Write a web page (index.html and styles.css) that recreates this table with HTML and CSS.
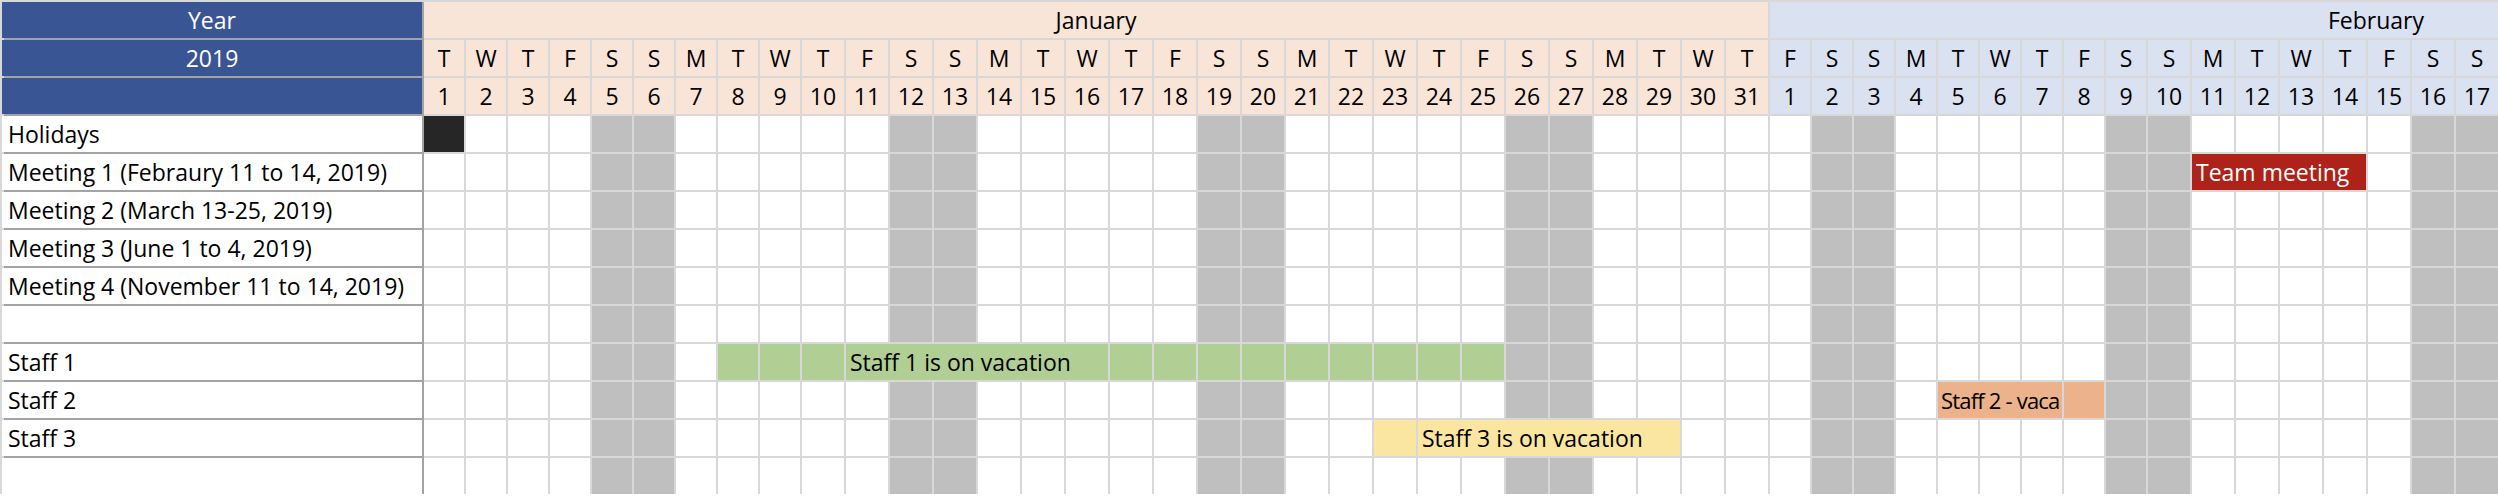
FILE: index.html
```html
<!DOCTYPE html>
<html lang="en">
<head>
<meta charset="utf-8">
<title>Calendar 2019</title>
<link rel="stylesheet" href="styles.css">
</head>
<body>
<div class="sheet">
  <!-- row 1: months -->
  <i class="hb">Year</i><i class="mj s31">January</i><i class="mf s28">February</i>
  <!-- row 2: weekdays -->
  <i class="hb">2019</i>
  <i class="dj">T</i><i class="dj">W</i><i class="dj">T</i><i class="dj">F</i><i class="dj">S</i><i class="dj">S</i><i class="dj">M</i>
  <i class="dj">T</i><i class="dj">W</i><i class="dj">T</i><i class="dj">F</i><i class="dj">S</i><i class="dj">S</i><i class="dj">M</i>
  <i class="dj">T</i><i class="dj">W</i><i class="dj">T</i><i class="dj">F</i><i class="dj">S</i><i class="dj">S</i><i class="dj">M</i>
  <i class="dj">T</i><i class="dj">W</i><i class="dj">T</i><i class="dj">F</i><i class="dj">S</i><i class="dj">S</i><i class="dj">M</i>
  <i class="dj">T</i><i class="dj">W</i><i class="dj">T</i>
  <i class="df">F</i><i class="df">S</i><i class="df">S</i><i class="df">M</i><i class="df">T</i><i class="df">W</i><i class="df">T</i>
  <i class="df">F</i><i class="df">S</i><i class="df">S</i><i class="df">M</i><i class="df">T</i><i class="df">W</i><i class="df">T</i>
  <i class="df">F</i><i class="df">S</i><i class="df">S</i><i class="df"></i><i class="df"></i><i class="df"></i><i class="df"></i>
  <i class="df"></i><i class="df"></i><i class="df"></i><i class="df"></i><i class="df"></i><i class="df"></i><i class="df"></i>
  <!-- row 3: dates -->
  <i class="hb"></i>
  <i class="dj">1</i><i class="dj">2</i><i class="dj">3</i><i class="dj">4</i><i class="dj">5</i><i class="dj">6</i><i class="dj">7</i>
  <i class="dj">8</i><i class="dj">9</i><i class="dj">10</i><i class="dj">11</i><i class="dj">12</i><i class="dj">13</i><i class="dj">14</i>
  <i class="dj">15</i><i class="dj">16</i><i class="dj">17</i><i class="dj">18</i><i class="dj">19</i><i class="dj">20</i><i class="dj">21</i>
  <i class="dj">22</i><i class="dj">23</i><i class="dj">24</i><i class="dj">25</i><i class="dj">26</i><i class="dj">27</i><i class="dj">28</i>
  <i class="dj">29</i><i class="dj">30</i><i class="dj">31</i>
  <i class="df">1</i><i class="df">2</i><i class="df">3</i><i class="df">4</i><i class="df">5</i><i class="df">6</i><i class="df">7</i>
  <i class="df">8</i><i class="df">9</i><i class="df">10</i><i class="df">11</i><i class="df">12</i><i class="df">13</i><i class="df">14</i>
  <i class="df">15</i><i class="df">16</i><i class="df">17</i><i class="df"></i><i class="df"></i><i class="df"></i><i class="df"></i>
  <i class="df"></i><i class="df"></i><i class="df"></i><i class="df"></i><i class="df"></i><i class="df"></i><i class="df"></i>

  <!-- Holidays -->
  <i class="lab">Holidays</i>
  <i class="hol"></i><i></i><i></i><i></i><i class="w"></i><i class="w"></i><i></i><i></i><i></i><i></i><i></i><i class="w"></i><i class="w"></i><i></i><i></i><i></i><i></i><i></i><i class="w"></i><i class="w"></i><i></i><i></i><i></i><i></i><i></i><i class="w"></i><i class="w"></i><i></i><i></i><i></i><i></i>
  <i></i><i class="w"></i><i class="w"></i><i></i><i></i><i></i><i></i><i></i><i class="w"></i><i class="w"></i><i></i><i></i><i></i><i></i><i></i><i class="w"></i><i class="w"></i><i></i><i></i><i></i><i></i><i></i><i class="w"></i><i class="w"></i><i></i><i></i><i></i><i></i>

  <!-- Meeting 1 -->
  <i class="lab">Meeting 1 (Febraury 11 to 14, 2019)</i>
  <i></i><i></i><i></i><i></i><i class="w"></i><i class="w"></i><i></i><i></i><i></i><i></i><i></i><i class="w"></i><i class="w"></i><i></i><i></i><i></i><i></i><i></i><i class="w"></i><i class="w"></i><i></i><i></i><i></i><i></i><i></i><i class="w"></i><i class="w"></i><i></i><i></i><i></i><i></i>
  <i></i><i class="w"></i><i class="w"></i><i></i><i></i><i></i><i></i><i></i><i class="w"></i><i class="w"></i><i class="bar red s4">Team meeting</i><i></i><i class="w"></i><i class="w"></i><i></i><i></i><i></i><i></i><i></i><i class="w"></i><i class="w"></i><i></i><i></i><i></i><i></i>

  <!-- Meeting 2 -->
  <i class="lab">Meeting 2 (March 13-25, 2019)</i>
  <i></i><i></i><i></i><i></i><i class="w"></i><i class="w"></i><i></i><i></i><i></i><i></i><i></i><i class="w"></i><i class="w"></i><i></i><i></i><i></i><i></i><i></i><i class="w"></i><i class="w"></i><i></i><i></i><i></i><i></i><i></i><i class="w"></i><i class="w"></i><i></i><i></i><i></i><i></i>
  <i></i><i class="w"></i><i class="w"></i><i></i><i></i><i></i><i></i><i></i><i class="w"></i><i class="w"></i><i></i><i></i><i></i><i></i><i></i><i class="w"></i><i class="w"></i><i></i><i></i><i></i><i></i><i></i><i class="w"></i><i class="w"></i><i></i><i></i><i></i><i></i>

  <!-- Meeting 3 -->
  <i class="lab">Meeting 3 (June 1 to 4, 2019)</i>
  <i></i><i></i><i></i><i></i><i class="w"></i><i class="w"></i><i></i><i></i><i></i><i></i><i></i><i class="w"></i><i class="w"></i><i></i><i></i><i></i><i></i><i></i><i class="w"></i><i class="w"></i><i></i><i></i><i></i><i></i><i></i><i class="w"></i><i class="w"></i><i></i><i></i><i></i><i></i>
  <i></i><i class="w"></i><i class="w"></i><i></i><i></i><i></i><i></i><i></i><i class="w"></i><i class="w"></i><i></i><i></i><i></i><i></i><i></i><i class="w"></i><i class="w"></i><i></i><i></i><i></i><i></i><i></i><i class="w"></i><i class="w"></i><i></i><i></i><i></i><i></i>

  <!-- Meeting 4 -->
  <i class="lab">Meeting 4 (November 11 to 14, 2019)</i>
  <i></i><i></i><i></i><i></i><i class="w"></i><i class="w"></i><i></i><i></i><i></i><i></i><i></i><i class="w"></i><i class="w"></i><i></i><i></i><i></i><i></i><i></i><i class="w"></i><i class="w"></i><i></i><i></i><i></i><i></i><i></i><i class="w"></i><i class="w"></i><i></i><i></i><i></i><i></i>
  <i></i><i class="w"></i><i class="w"></i><i></i><i></i><i></i><i></i><i></i><i class="w"></i><i class="w"></i><i></i><i></i><i></i><i></i><i></i><i class="w"></i><i class="w"></i><i></i><i></i><i></i><i></i><i></i><i class="w"></i><i class="w"></i><i></i><i></i><i></i><i></i>

  <!-- blank -->
  <i class="lab"></i>
  <i></i><i></i><i></i><i></i><i class="w"></i><i class="w"></i><i></i><i></i><i></i><i></i><i></i><i class="w"></i><i class="w"></i><i></i><i></i><i></i><i></i><i></i><i class="w"></i><i class="w"></i><i></i><i></i><i></i><i></i><i></i><i class="w"></i><i class="w"></i><i></i><i></i><i></i><i></i>
  <i></i><i class="w"></i><i class="w"></i><i></i><i></i><i></i><i></i><i></i><i class="w"></i><i class="w"></i><i></i><i></i><i></i><i></i><i></i><i class="w"></i><i class="w"></i><i></i><i></i><i></i><i></i><i></i><i class="w"></i><i class="w"></i><i></i><i></i><i></i><i></i>

  <!-- Staff 1 -->
  <i class="lab">Staff 1</i>
  <i></i><i></i><i></i><i></i><i class="w"></i><i class="w"></i><i></i><i class="green"></i><i class="green"></i><i class="green"></i><i class="bar green s6">Staff 1 is on vacation</i><i class="green"></i><i class="green"></i><i class="green"></i><i class="green"></i><i class="green"></i><i class="green"></i><i class="green"></i><i class="green"></i><i class="green"></i><i class="w"></i><i class="w"></i><i></i><i></i><i></i><i></i>
  <i></i><i class="w"></i><i class="w"></i><i></i><i></i><i></i><i></i><i></i><i class="w"></i><i class="w"></i><i></i><i></i><i></i><i></i><i></i><i class="w"></i><i class="w"></i><i></i><i></i><i></i><i></i><i></i><i class="w"></i><i class="w"></i><i></i><i></i><i></i><i></i>

  <!-- Staff 2 -->
  <i class="lab">Staff 2</i>
  <i></i><i></i><i></i><i></i><i class="w"></i><i class="w"></i><i></i><i></i><i></i><i></i><i></i><i class="w"></i><i class="w"></i><i></i><i></i><i></i><i></i><i></i><i class="w"></i><i class="w"></i><i></i><i></i><i></i><i></i><i></i><i class="w"></i><i class="w"></i><i></i><i></i><i></i><i></i>
  <i></i><i class="w"></i><i class="w"></i><i></i><i class="bar orange s3 squeeze">Staff 2 - vaca</i><i class="orange"></i><i class="w"></i><i class="w"></i><i></i><i></i><i></i><i></i><i></i><i class="w"></i><i class="w"></i><i></i><i></i><i></i><i></i><i></i><i class="w"></i><i class="w"></i><i></i><i></i><i></i><i></i>

  <!-- Staff 3 -->
  <i class="lab">Staff 3</i>
  <i></i><i></i><i></i><i></i><i class="w"></i><i class="w"></i><i></i><i></i><i></i><i></i><i></i><i class="w"></i><i class="w"></i><i></i><i></i><i></i><i></i><i></i><i class="w"></i><i class="w"></i><i></i><i></i><i class="yellow"></i><i class="bar yellow s6">Staff 3 is on vacation</i><i></i><i></i>
  <i></i><i class="w"></i><i class="w"></i><i></i><i></i><i></i><i></i><i></i><i class="w"></i><i class="w"></i><i></i><i></i><i></i><i></i><i></i><i class="w"></i><i class="w"></i><i></i><i></i><i></i><i></i><i></i><i class="w"></i><i class="w"></i><i></i><i></i><i></i><i></i>

  <!-- blank -->
  <i class="lab"></i>
  <i></i><i></i><i></i><i></i><i class="w"></i><i class="w"></i><i></i><i></i><i></i><i></i><i></i><i class="w"></i><i class="w"></i><i></i><i></i><i></i><i></i><i></i><i class="w"></i><i class="w"></i><i></i><i></i><i></i><i></i><i></i><i class="w"></i><i class="w"></i><i></i><i></i><i></i><i></i>
  <i></i><i class="w"></i><i class="w"></i><i></i><i></i><i></i><i></i><i></i><i class="w"></i><i class="w"></i><i></i><i></i><i></i><i></i><i></i><i class="w"></i><i class="w"></i><i></i><i></i><i></i><i></i><i></i><i class="w"></i><i class="w"></i><i></i><i></i><i></i><i></i>
</div>
</body>
</html>
```
FILE: styles.css
```css
html, body {
  margin: 0;
  padding: 0;
  background: #ffffff;
  overflow: hidden;
}

.sheet {
  display: grid;
  grid-template-columns: 420px repeat(9, 40px) repeat(22, 42px) repeat(9, 40px) repeat(19, 42px);
  grid-auto-rows: 36px;
  gap: 2px;
  padding: 2px 0 0 2px;
  width: max-content;
  background: #d8d8d8;
  font-family: "Open Sans", Lato, "Liberation Sans", sans-serif;
  font-size: 23px;
  color: #000000;
}

.sheet > i {
  display: block;
  font-style: normal;
  background: #ffffff;
  line-height: 36px;
  white-space: nowrap;
  overflow: hidden;
}

.sheet > .w { background: #bfbfbf; }
.sheet > .hol { background: #262626; }

.sheet > .lab {
  padding-left: 6px;
  box-shadow: 2px 0 0 #a3a3a3, 2px 2px 0 #a3a3a3;
}

.sheet > .hb {
  background: #3a5593;
  color: #ffffff;
  text-align: center;
  box-shadow: 2px 0 0 #a3a3a3, 2px 2px 0 #a3a3a3;
}

.sheet > .mj,
.sheet > .dj { background: #f9e5d8; text-align: center; }

.sheet > .mf,
.sheet > .df { background: #dae1f1; text-align: center; }

.s3 { grid-column: span 3; }
.s4 { grid-column: span 4; }
.s6 { grid-column: span 6; }
.s28 { grid-column: span 28; }
.s31 { grid-column: span 31; }

.sheet > .bar { padding-left: 4px; }

.sheet > .squeeze {
  font-size: 22px;
  letter-spacing: -0.8px;
  padding-left: 3px;
}

.sheet > .green { background: #b1cf95; }
.sheet > .yellow { background: #fae6a0; }
.sheet > .orange { background: #ebb28b; }
.sheet > .red { background: #ae2219; color: #ffffff; }
```
